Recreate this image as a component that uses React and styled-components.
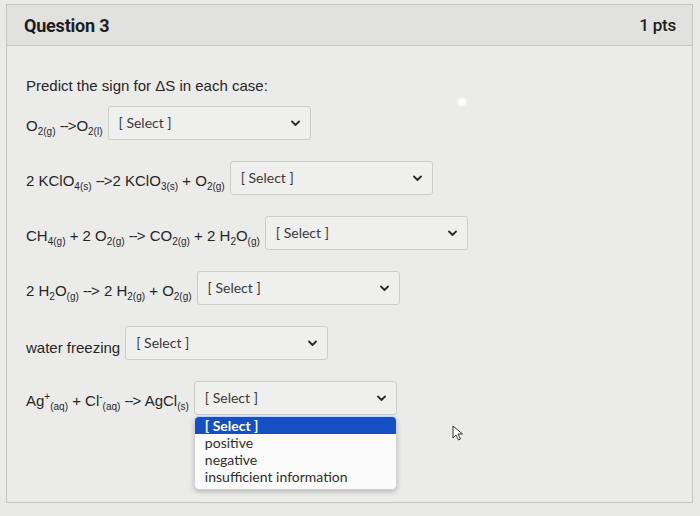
import React from 'react'
import styled, { createGlobalStyle } from 'styled-components'

const Global = createGlobalStyle`
    html, body {
        margin: 0;
        padding: 0;
        background: #e9e9e8;
    }
    body {
        width: 700px;
        height: 516px;
        overflow: hidden;
        font-family: 'Liberation Sans', Arial, sans-serif;
    }
`

const Page = styled.div`
    position: relative;
    padding: 4px 7px 0 6px;
    height: 516px;
    box-sizing: border-box;
`

const Panel = styled.div`
    border: 1px solid #c4c4c3;
    height: 499px;
    box-sizing: border-box;
    display: flex;
    flex-direction: column;
    background: #ebebea;
`

const Header = styled.div`
    display: flex;
    align-items: center;
    justify-content: space-between;
    height: 40px;
    padding: 0 16px 0 17px;
    background: #e1e1e0;
    border-bottom: 1px solid #c6c6c5;
    font-family: Roboto, 'Liberation Sans', sans-serif;
    font-weight: 700;
    font-size: 18px;
    color: #1e1e1e;
    letter-spacing: -0.2px;
`

const Pts = styled.span`
    font-weight: 500;
    font-size: 17px;
`

const Body = styled.div`
    padding: 31px 0 0 19px;
    display: flex;
    flex-direction: column;
`

const Prompt = styled.p`
    margin: 0 0 12px;
    font-size: 15px;
    color: #262626;
`

const Rows = styled.div`
    display: flex;
    flex-direction: column;
    gap: 21px;
`

const Row = styled.div`
    display: flex;
    align-items: flex-end;
    gap: 5px;
`

const Label = styled.span`
    font-size: 15px;
    color: #262626;
    padding-bottom: ${p => p.$low ? 4 : 6}px;
    white-space: nowrap;
`

const Arrow = styled.span`
    letter-spacing: -1px;
    margin-right: 1px;
`

const Sub = styled.sub`
    font-size: 10px;
    vertical-align: -4px;
    line-height: 0;
`

const Sup = styled.sup`
    font-size: 10px;
    vertical-align: 6px;
    line-height: 0;
`

const SelectWrap = styled.div`
    position: relative;
`

const SelectBox = styled.div`
    width: 203px;
    height: 34px;
    box-sizing: border-box;
    border: 1px solid #cdcdcc;
    border-radius: 3px;
    background: #efefee;
    display: flex;
    align-items: center;
    justify-content: space-between;
    padding: 0 10px 2px 10px;
    font-family: Lato, 'Open Sans', sans-serif;
    font-size: 14px;
    color: #3a3a3a;
`

const Chevron = styled.svg`
    width: 9px;
    height: 7px;
    margin-top: 3px;
`

const Menu = styled.ul`
    position: absolute;
    left: 0;
    top: 35px;
    width: 203px;
    margin: 0;
    padding: 0 0 4px;
    list-style: none;
    background: #fbfbfb;
    border: 1px solid #d4d4d4;
    border-radius: 5px;
    box-shadow: 0 2px 5px rgba(0, 0, 0, 0.22);
    box-sizing: border-box;
    overflow: hidden;
    font-family: Lato, 'Open Sans', sans-serif;
    font-size: 14px;
    z-index: 2;
`

const Option = styled.li`
    height: 17px;
    line-height: 17px;
    padding-left: 10px;
    color: ${p => p.$active ? '#fff' : '#2e2e2e'};
    background: ${p => p.$active ? '#1450c4' : 'transparent'};
    font-weight: ${p => p.$active ? 700 : 400};
`

const Cursor = styled.svg`
    position: absolute;
    left: 452px;
    top: 425px;
    width: 12px;
    height: 16px;
`

const Glare = styled.div`
    position: absolute;
    left: 458px;
    top: 98px;
    width: 8px;
    height: 8px;
    border-radius: 50%;
    background: #fff;
    filter: blur(1px);
`

const Select = ({ open }) => (
    <SelectWrap>
        <SelectBox>
            <span>[ Select ]</span>
            <Chevron viewBox="0 0 9 7">
                <path d="M1 1.5 L4.5 5 L8 1.5" fill="none" stroke="#2a2a2a" strokeWidth="1.8" strokeLinecap="round" strokeLinejoin="round" />
            </Chevron>
        </SelectBox>
        {open && (
            <Menu>
                <Option $active>[ Select ]</Option>
                <Option>positive</Option>
                <Option>negative</Option>
                <Option>insufficient information</Option>
            </Menu>
        )}
    </SelectWrap>
)

const To = () => <Arrow>--&gt;</Arrow>

const App = () => {
    return (
        <>
            <Global />
            <Page>
                <Panel>
                    <Header>
                        <span>Question 3</span>
                        <Pts>1 pts</Pts>
                    </Header>
                    <Body>
                        <Prompt>Predict the sign for ΔS in each case:</Prompt>
                        <Rows>
                            <Row>
                                <Label>O<Sub>2(g)</Sub> <To />O<Sub>2(l)</Sub></Label>
                                <Select />
                            </Row>
                            <Row>
                                <Label>2 KClO<Sub>4(s)</Sub> <To />2 KClO<Sub>3(s)</Sub> + O<Sub>2(g)</Sub></Label>
                                <Select />
                            </Row>
                            <Row>
                                <Label>CH<Sub>4(g)</Sub> + 2 O<Sub>2(g)</Sub> <To /> CO<Sub>2(g)</Sub> + 2 H<Sub>2</Sub>O<Sub>(g)</Sub></Label>
                                <Select />
                            </Row>
                            <Row>
                                <Label>2 H<Sub>2</Sub>O<Sub>(g)</Sub> <To /> 2 H<Sub>2(g)</Sub> + O<Sub>2(g)</Sub></Label>
                                <Select />
                            </Row>
                            <Row>
                                <Label $low>water freezing</Label>
                                <Select />
                            </Row>
                            <Row>
                                <Label>Ag<Sup>+</Sup><Sub>(aq)</Sub> + Cl<Sup>-</Sup><Sub>(aq)</Sub> <To /> AgCl<Sub>(s)</Sub></Label>
                                <Select open />
                            </Row>
                        </Rows>
                    </Body>
                </Panel>
                <Glare />
                <Cursor viewBox="0 0 12 16">
                    <path d="M1 1 L1 13 L4 10 L6.5 15 L8.5 14 L6 9 L10.5 9 Z" fill="#fff" stroke="#333" strokeWidth="1" strokeLinejoin="round" />
                </Cursor>
            </Page>
        </>
    )
}

export default App
